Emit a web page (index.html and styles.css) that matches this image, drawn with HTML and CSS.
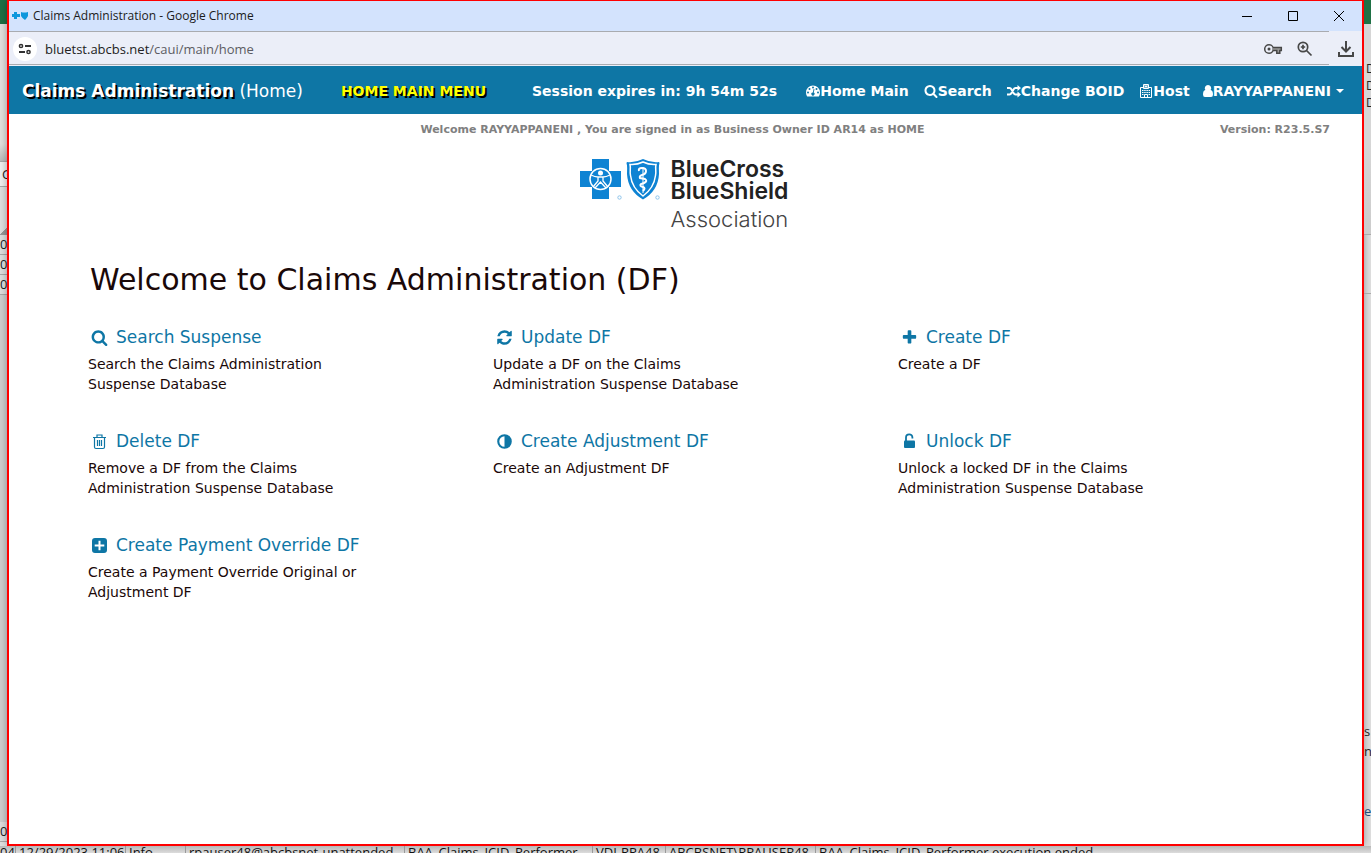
FILE: index.html
```html
<!DOCTYPE html>
<html lang="en">
<head>
<meta charset="utf-8">
<meta name="viewport" content="width=device-width, initial-scale=1">
<title>Claims Administration</title>
<link rel="stylesheet" href="styles.css">
</head>
<body>
<svg class="defs" aria-hidden="true">
  <symbol id="search" viewBox="0 0 1792 1792"><path d="M1216 832q0-185-131.5-316.5t-316.5-131.5-316.5 131.5-131.5 316.5 131.5 316.5 316.5 131.5 316.5-131.5 131.5-316.5zm512 832q0 52-38 90t-90 38q-54 0-90-38l-343-342q-179 124-399 124-143 0-273.5-55.5t-225-150-150-225-55.5-273.5 55.5-273.5 150-225 225-150 273.5-55.5 273.5 55.5 225 150 150 225 55.5 273.5q0 220-124 399l343 343q37 37 37 90z"/></symbol>
</svg>
<div class="desktop">
  <div class="sheet-left" aria-hidden="true">
    <div class="green"></div>
    <div class="ribbon"></div>
    <div class="formula">G</div>
    <div class="corner"></div>
    <div class="row">0</div>
    <div class="row">0</div>
    <div class="row">0</div>
    <div class="blank"></div>
    <div class="row">0</div>
  </div>

  <div class="window">
    <header class="titlebar">
      <svg class="favicon" viewBox="0 0 16 10"><path fill="#0e97dc" d="M2 1h3v2h3v3H5v2H2V6H0V3h2zM9 1q3 1 7 0v4q-1 2-3 4-3-2-4-4z"/></svg>
      <span class="caption">Claims Administration - Google Chrome</span>
      <button class="win-btn" aria-label="Minimize"><svg viewBox="0 0 12 12"><path d="M1 6.500h10"/></svg></button>
      <button class="win-btn" aria-label="Maximize"><svg viewBox="0 0 12 12"><path d="M1.500 1.500h9v9h-9z"/></svg></button>
      <button class="win-btn" aria-label="Close"><svg viewBox="0 0 12 12"><path d="M1 1l10 10M11 1L1 11"/></svg></button>
    </header>

    <div class="address">
      <button class="site-info" aria-label="Site information"><svg viewBox="0 0 14 12" fill="none" stroke="#333" stroke-width="2"><circle cx="3" cy="3" r="1.600" stroke-width="1.500"/><path d="M7 3h6M1 9h6"/><circle cx="10.500" cy="9" r="1.600" stroke-width="1.500"/></svg></button>
      <span class="url">bluetst.abcbs.net<span class="path">/caui/main/home</span></span>
      <button class="tool" aria-label="Passwords"><svg viewBox="0 0 20 20" fill="none" stroke="#474747" stroke-width="1.500"><circle cx="6" cy="10" r="4.300"/><circle cx="6" cy="10" r="1.500" fill="#474747" stroke="none"/><path fill="#999" d="M10 8.500h8.300v3h-1.500v2.800h-3v-2.800H10"/></svg></button>
      <button class="tool" aria-label="Zoom"><svg viewBox="0 0 20 20" fill="none" stroke="#474747" stroke-width="1.700"><circle cx="8" cy="8" r="4.700"/><path d="M11.500 11.500l5 5M8 5.800v4.400M5.800 8h4.400"/></svg></button>
      <button class="tool download" aria-label="Downloads"><svg viewBox="0 0 20 20" fill="none" stroke="#474747" stroke-width="2"><path d="M10 2v10M5.500 8l4.500 4.500L14.500 8M3 13v4h14v-4"/></svg></button>
    </div>

    <nav class="navbar">
      <a class="brand" href="#"><b>Claims Administration</b> (Home)</a>
      <span class="menu-name">HOME MAIN MENU</span>
      <span class="session">Session expires in: 9h 54m 52s</span>
      <div class="links">
        <a href="#"><svg class="ico" viewBox="0 0 14 14"><path fill="#fff" d="M7 1.500a7 7 0 0 0-7 7q0 2 1 3.700.200.300.500.300h11q.300 0 .500-.300 1-1.700 1-3.700a7 7 0 0 0-7-7z"/><g fill="#0e76a5"><circle cx="2" cy="8.500" r="1"/><circle cx="3.500" cy="5" r="1"/><circle cx="7" cy="3.500" r="1"/><circle cx="10.500" cy="5" r="1"/><circle cx="12" cy="8.500" r="1"/><path d="M8.500 5.200l-.800 3.400a1.600 1.600 0 1 1-.900-.200l.800-3.400z"/></g></svg>Home Main</a>
        <a href="#"><svg class="ico" fill="#fff"><use href="#search"/></svg>Search</a>
        <a href="#"><svg class="ico" viewBox="0 0 14 14"><path fill="none" stroke="#fff" stroke-width="2" d="M0 4h2.500q1.200 0 2 1.500l2 3.500q.900 1.500 2 1.500H11M0 10.500h2.500q1.200 0 2-1.500l2-3.500Q7.400 4 8.500 4H11"/><path fill="#fff" d="M10.500 1L14 4l-3.500 3zM10.500 7.500l3.500 3-3.500 3z"/></svg>Change BOID</a>
        <a href="#"><svg class="ico" viewBox="0 0 14 14"><path fill="none" stroke="#fff" d="M4.500 3.500h-3v10h11v-10h-3M4.500 4.500v-4h5v4zM6 1v3M8 1v3M6 2.500h2M5.500 13v-2.500h3V13"/><path fill="#fff" d="M3 6h1.500v1H3zM5.200 6h1.500v1H5.200zM7.400 6h1.500v1H7.400zM9.600 6H11v1H9.600zM3 8h1.500v1H3zM5.200 8h1.500v1H5.200zM7.400 8h1.500v1H7.400zM9.600 8H11v1H9.600zM3 10h1.500v1H3zM9.600 10H11v1H9.600z"/></svg>Host</a>
        <a href="#"><svg class="ico user" viewBox="0 0 10 14"><path fill="#fff" d="M5 1a3.200 3.200 0 0 1 2.600 5.100Q10 6.500 10 10.500 10 13 8 13H2q-2 0-2-2.500 0-4 2.400-4.400A3.200 3.200 0 0 1 5 1z"/></svg>RAYYAPPANENI<i class="caret"></i></a>
      </div>
    </nav>

    <main>
      <div class="status">
        <span></span>
        <span>Welcome RAYYAPPANENI , You are signed in as Business Owner ID AR14 as HOME</span>
        <span class="version">Version: R23.5.S7</span>
      </div>

      <div class="logo">
        <svg class="marks" viewBox="0 0 84 44">
          <path fill="#0e83d3" d="M13 1h17v12h12v16H30v12H13V29H1V13h12z"/>
          <g fill="none" stroke="#fff"><circle cx="21.500" cy="21" r="10.500" stroke-width="1.500"/><path stroke-width="1.300" d="M12 17q4 2 7 2h5q3 0 7-2M19 19v4l-5 6M24 19v4l5 6M16 30l5.500-6 5.500 6"/></g>
          <circle cx="21.500" cy="15" r="2.500" fill="#fff"/>
          <path fill="#0e83d3" d="M48 4q8 1 16-3 8 4 16 3l.500 1c-1 3-.500 7-.500 11q-1 17-16 25.500Q49 33 48 16c0-4 .500-8-.500-11z"/>
          <path fill="none" stroke="#fff" stroke-width="1.500" d="M51 6.500q7 .500 13-2.500 6 3 13 2.500c-1 4 .500 7-.500 11Q75 30 64 38 53 30 51.500 17.500c-1-4 .500-7-.500-11z"/>
          <path fill="none" stroke="#fff" stroke-width="2" d="M60 13q-1-3 3-3t4 3q0 3-4 4-3 1-2 3l5 1q3 2-1 4l-3 1q-2 2 2 3 3 1 0 4"/><path stroke="#fff" d="M64 9v26"/>
          <g fill="none" stroke="#8fc5ec"><circle cx="40.500" cy="39.500" r="1.700"/><circle cx="78.500" cy="39.500" r="1.700"/></g>
        </svg>
        <div class="wordmark"><b>BlueCross<br>BlueShield</b><span>Association</span></div>
      </div>

      <section class="content">
        <h1>Welcome to Claims Administration (DF)</h1>
        <div class="tiles">
          <article>
            <a href="#"><svg class="tile-ico"><use href="#search"/></svg>Search Suspense</a>
            <p>Search the Claims Administration Suspense Database</p>
          </article>
          <article>
            <a href="#"><svg class="tile-ico" viewBox="0 0 1792 1792"><path d="M1639 1056q0 5-1 7-64 268-268 434.500t-478 166.500q-146 0-282.500-55t-243.500-157l-129 129q-19 19-45 19t-45-19-19-45v-448q0-26 19-45t45-19h448q26 0 45 19t19 45-19 45l-137 137q71 66 161 102t187 36q134 0 250-65t186-179q11-17 53-117 8-23 30-23h192q13 0 22.500 9.500t9.500 22.500zm25-800v448q0 26-19 45t-45 19h-448q-26 0-45-19t-19-45 19-45l138-138q-148-137-349-137-134 0-250 65t-186 179q-11 17-53 117-8 23-30 23h-199q-13 0-22.500-9.500t-9.500-22.500v-7q65-268 270-434.500t480-166.500q146 0 284 55.500t245 156.500l130-129q19-19 45-19t45 19 19 45z"/></svg>Update DF</a>
            <p>Update a DF on the Claims Administration Suspense Database</p>
          </article>
          <article>
            <a href="#"><svg class="tile-ico" viewBox="0 0 1792 1792"><path d="M1600 736v192q0 40-28 68t-68 28h-416v416q0 40-28 68t-68 28h-192q-40 0-68-28t-28-68v-416h-416q-40 0-68-28t-28-68v-192q0-40 28-68t68-28h416v-416q0-40 28-68t68-28h192q40 0 68 28t28 68v416h416q40 0 68 28t28 68z"/></svg>Create DF</a>
            <p>Create a DF</p>
          </article>
          <article>
            <a href="#"><svg class="tile-ico" viewBox="0 0 17 17"><path fill="none" stroke="currentColor" stroke-width="1.200" d="M2 4.500h13M6 4V2h5v2M3.500 5v9q0 1.500 1.500 1.500h7q1.500 0 1.500-1.500V5M6.500 7v6M8.500 7v6M10.500 7v6"/></svg>Delete DF</a>
            <p>Remove a DF from the Claims Administration Suspense Database</p>
          </article>
          <article>
            <a href="#"><svg class="tile-ico" viewBox="0 0 17 17"><path fill-rule="evenodd" d="M8.500 1.200a7.300 7.300 0 1 1 0 14.600 7.300 7.300 0 0 1 0-14.600zm0 2.100a5.200 5.200 0 0 0 0 10.400z"/></svg>Create Adjustment DF</a>
            <p>Create an Adjustment DF</p>
          </article>
          <article>
            <a href="#"><svg class="tile-ico" viewBox="0 0 17 17"><rect x="3" y="7.500" width="11" height="7.500" rx="1"/><path fill="none" stroke="currentColor" stroke-width="1.800" d="M5 8V4.500a3.200 3.200 0 0 1 6.400 0V5.500"/></svg>Unlock DF</a>
            <p>Unlock a locked DF in the Claims Administration Suspense Database</p>
          </article>
          <article>
            <a href="#"><svg class="tile-ico" viewBox="0 0 17 17"><path fill-rule="evenodd" d="M4 1h9q3 0 3 3v9q0 3-3 3H4q-3 0-3-3V4q0-3 3-3zm3.500 2.700v3.800H3.700v2h3.800v3.800h2V9.500h3.800v-2H9.500V3.700z"/></svg>Create Payment Override DF</a>
            <p>Create a Payment Override Original or Adjustment DF</p>
          </article>
        </div>
      </section>
    </main>
  </div>

  <div class="sheet-right" aria-hidden="true">
    <div class="green"></div>
    <div class="ribbon-text"><span>D</span><span>D</span><span>D</span></div>
    <div class="line"></div>
    <div class="blank"></div>
    <div class="notes"><span>s</span><span>n</span></div>
    <div class="cell-end">el</div>
  </div>

  <div class="sheet-bottom" aria-hidden="true">
    <span>04</span><span>12/29/2023 11:06</span><span>Info</span><span>rpauser48@abcbsnet-unattended</span><span>BAA_Claims_ICID_Performer</span><span>VDI-RPA48</span><span>ABCBSNET\RPAUSER48</span><span>BAA_Claims_ICID_Performer execution ended</span>
  </div>
</div>
</body>
</html>
```
FILE: styles.css
```css
* { box-sizing: border-box; }

body {
  margin: 0;
  font-family: Verdana, "DejaVu Sans", sans-serif;
  color: #1a0808;
}

a { text-decoration: none; }
button { border: 0; padding: 0; background: none; }
.defs { display: none; }

.desktop {
  display: grid;
  grid-template-columns: 7px minmax(0, 1fr) 7px;
  grid-template-rows: 1fr 7px;
  height: 100vh;
  overflow: hidden;
  background: #e1e1e1;
}

/* spreadsheet behind the window */
.sheet-left, .sheet-right {
  display: flex;
  flex-direction: column;
  overflow: hidden;
  font: 13px/19px "Open Sans", sans-serif;
  color: #222;
}
.green { height: 24px; background: #1f7145; flex: none; }
.ribbon { height: 138px; background: linear-gradient(#e4e2df 120px, #bbb); border-bottom: 1px solid #aaa; }
.formula { height: 25px; padding: 3px 0 0 2px; background: #f2f2f2; border-bottom: 1px solid #aaa; }
.corner { height: 48px; background: linear-gradient(135deg, transparent 50%, #999 50%) 0 100% / 7px 7px no-repeat; }
.row { height: 20px; flex: none; border-bottom: 1px solid #aaa; }
.sheet-left .blank, .sheet-right .blank { flex: 1; }
.sheet-left .blank { background: #d0d0d0; }
.sheet-left .row:last-child { margin-bottom: 4px; }
.ribbon-text { height: 210px; padding: 36px 0 0 2px; display: flex; flex-direction: column; font-size: 12px; line-height: 17px; background: linear-gradient(#d6d6d6 120px, #ccc); }
.line { height: 60px; border-top: 1px solid #aaa; border-bottom: 1px solid #aaa; }
.notes { height: 80px; display: flex; flex-direction: column; line-height: 20px; }
.cell-end { height: 45px; line-height: 20px; color: #1f4e79; }
.sheet-bottom {
  grid-column: 1 / -1;
  display: grid;
  grid-template-columns: 16px 110px 60px 219px 188px 73px 150px minmax(0, 1fr);
  overflow: hidden;
  font: 13px/12px "Open Sans", sans-serif;
  color: #111;
  background: linear-gradient(#b8b8b8, #dcdcdc);
  white-space: nowrap;
}
.sheet-bottom span { padding-left: 3px; border-right: 1px solid #999; overflow: hidden; }
.sheet-bottom span:first-child { padding: 0; }
.sheet-bottom span:last-child { border: 0; }

/* browser window */
.window {
  display: flex;
  flex-direction: column;
  border: 2px solid #f00;
  border-top-width: 1px;
  background: #fff;
  box-shadow: 0 0 8px rgba(0, 0, 0, .35);
}
.titlebar {
  display: flex;
  align-items: center;
  height: 30px;
  padding-left: 3px;
  background: #d3e3fd;
  font: 12px/16px "Segoe UI", "Open Sans", sans-serif;
  color: #1b1b1b;
}
.favicon { width: 16px; height: 10px; margin-right: 5px; }
.caption { flex: 1; }
.win-btn { width: 46px; height: 30px; }
.win-btn svg { width: 12px; height: 12px; fill: none; stroke: #000; stroke-width: 1; display: block; margin: 0 auto; }

.address {
  display: flex;
  align-items: center;
  height: 35px;
  padding: 0 2px 0 4px;
  background: linear-gradient(#a9abb0, #a9abb0) 0 0 / calc(100% - 33px) 1px no-repeat,
    linear-gradient(#a9abb0, #a9abb0) 0 33px / calc(100% - 33px) 1px no-repeat, #ebeef8;
  font: 13px/20px "Segoe UI", "Open Sans", sans-serif;
  color: #222;
}
.site-info { width: 24px; height: 24px; border-radius: 50%; background: #fff; }
.site-info svg { width: 14px; height: 12px; display: block; margin: 0 auto; }
.url { flex: 1; margin-left: 8px; }
.path { color: #5c5c62; }
.tool { width: 20px; height: 20px; margin-right: 12px; }
.tool svg { width: 20px; height: 20px; display: block; }
.download { margin: 0 4px 0 9px; }

.navbar {
  display: flex;
  align-items: center;
  height: 48px;
  padding: 2px 18px 0 13px;
  background: #0e76a5;
  color: #fff;
  white-space: nowrap;
  font-weight: bold;
  font-size: 14px;
}
.navbar a { color: #fff; }
.brand { font-size: 17px; font-weight: normal; }
.brand b { text-shadow: 2px 2px #000; }
.menu-name { margin-left: 38px; color: #ff0; text-shadow: 2px 2px #000; }
.session { margin-left: 46px; }
.links { display: flex; gap: 15px; margin-left: auto; }
.links a { display: flex; align-items: center; }
.ico { width: 14px; height: 14px; }
.ico.user { width: 10px; }
.links a:last-child { margin-left: -2px; }
.caret { margin-left: 5px; border: 4px solid transparent; border-top-color: #fff; border-bottom: 0; }

.status {
  display: grid;
  grid-template-columns: 1fr auto 1fr;
  padding: 8px 32px 0 6px;
  font-size: 11px;
  line-height: 16px;
  font-weight: bold;
  color: #808080;
}
.version { text-align: right; }

.logo { display: flex; justify-content: center; margin-top: 20px; padding-right: 4px; }
.marks { width: 84px; height: 44px; }
.wordmark { display: flex; flex-direction: column; margin-left: 8px; font: 23px/22px Inter, "Liberation Sans", sans-serif; color: #222; }
.wordmark b { font-weight: 600; }
.wordmark span { font-size: 22px; line-height: 34px; font-weight: 300; color: #444; }

.content { padding: 24px 59px 0 79px; }
h1 { margin: 0; padding-left: 2px; font-size: 30px; line-height: 40px; font-weight: normal; }
.tiles { display: grid; grid-template-columns: repeat(3, 1fr); row-gap: 30px; margin-top: 20px; }
.tiles a { display: flex; align-items: center; gap: 8px; padding-left: 3px; font-size: 17px; line-height: 34px; color: #0e76a5; }
.tile-ico { width: 17px; height: 17px; fill: currentColor; }
.tiles p { max-width: 270px; margin: 0; font-size: 14px; line-height: 20px; }
```
